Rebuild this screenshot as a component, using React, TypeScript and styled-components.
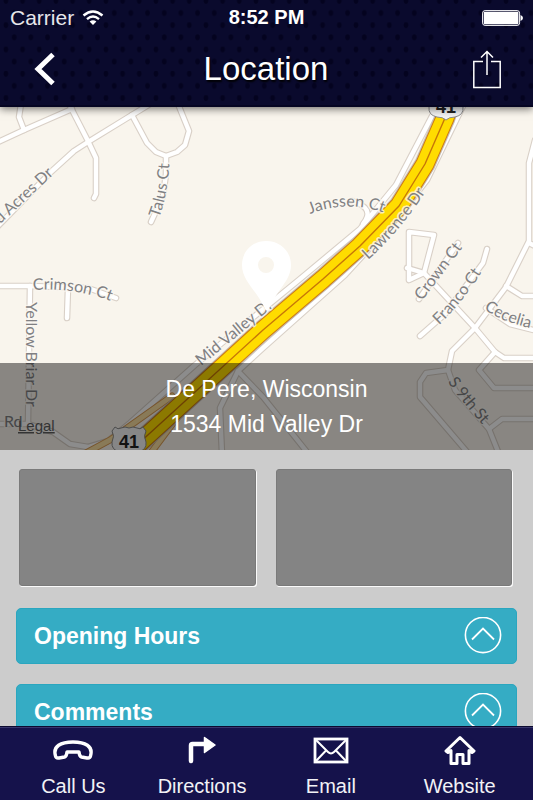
import React from "react";
import styled, { createGlobalStyle } from "styled-components";

const GlobalStyle = createGlobalStyle`
  *, *::before, *::after { box-sizing: border-box; }
  body {
    margin: 0;
    background: #cccccc;
    font-family: "Liberation Sans", Arial, sans-serif;
  }
`;

const Screen = styled.div`
  display: flex;
  flex-direction: column;
  height: 100vh;
  overflow: hidden;
  background: #cccccc;
`;

const Header = styled.header`
  position: relative;
  z-index: 1;
  flex: none;
  background: #0a0a2d;
  border-bottom: 2px solid #050522;
  box-shadow: 0 2px 8px rgba(0, 0, 0, 0.55);
  color: #fff;
`;

const Texture = styled.svg`
  position: absolute;
  inset: 0;
  width: 100%;
  height: 100%;
`;

const StatusBar = styled.div`
  position: relative;
  display: grid;
  grid-template-columns: 1fr auto 1fr;
  align-items: center;
  height: 35px;
  padding: 0 10px;
  font-size: 20px;
`;

const Carrier = styled.span`
  display: flex;
  align-items: center;
  gap: 8px;
  color: #e6e6ea;
  font-size: 21px;
`;

const Clock = styled.time`
  font-weight: bold;
`;

const BatteryIcon = styled.svg`
  justify-self: end;
`;

const NavBar = styled.div`
  position: relative;
  display: grid;
  grid-template-columns: 48px 1fr 48px;
  align-items: center;
  height: 70px;
  padding: 0 22px 2px 21px;
`;

const Title = styled.h1`
  margin: 0;
  text-align: center;
  font-size: 33px;
  line-height: 40px;
  font-weight: normal;
  text-shadow: 1px 2px 2px #000;
`;

const IconButton = styled.button`
  display: flex;
  align-items: center;
  justify-content: center;
  height: 48px;
  padding: 0;
  border: 0;
  background: none;
  color: #fff;
`;

const MapPanel = styled.section`
  position: relative;
  flex: none;
  height: 343px;
  background: #f9f5ed;
`;

const MapCanvas = styled.svg`
  display: block;
  width: 100%;
  height: 100%;
`;

const Address = styled.address`
  position: absolute;
  left: 0;
  right: 0;
  bottom: 0;
  padding: 9px 0 8px;
  background: rgba(0, 0, 0, 0.45);
  color: #fff;
  font-size: 23px;
  line-height: 35px;
  font-style: normal;
  text-align: center;
  pointer-events: none;
`;

const Content = styled.main`
  flex: 1;
  min-height: 0;
  overflow: hidden;
  display: flex;
  flex-direction: column;
  gap: 20px;
  padding: 19px 16px 0;
`;

const Photos = styled.div`
  flex: none;
  display: grid;
  grid-template-columns: 1fr 1fr;
  gap: 20px;
  padding: 0 5px 2px 3px;
`;

const Photo = styled.div`
  height: 117px;
  border: 1px solid #7a7a7a;
  border-radius: 3px;
  background: #848484;
  box-shadow: 1px 1px 0 0 #fafafa, 0 2px 0 -1px #fafafa;
`;

const Section = styled.button`
  flex: none;
  display: flex;
  align-items: center;
  justify-content: space-between;
  height: 56px;
  padding: 0 14px 0 17px;
  border: 1px solid #2aa6bf;
  border-radius: 5px;
  background: #35acc4;
  color: #fff;
  font: bold 23px "Liberation Sans", Arial, sans-serif;
`;

const TabBar = styled.nav`
  flex: none;
  display: grid;
  grid-template-columns: repeat(4, 1fr);
  height: 74px;
  padding: 0 9px;
  border-top: 1px solid #0c0a30;
  background: #15124b;
  box-shadow: inset 0 1px 0 #38366c;
`;

const Tab = styled.a`
  display: flex;
  flex-direction: column;
  align-items: center;
  gap: 7px;
  padding-top: 8px;
  color: #f2f2f6;
  font-size: 20px;
  line-height: 25px;
  text-decoration: none;
  white-space: nowrap;
`;

const TabIcon = styled.svg`
  flex: none;
  fill: none;
  stroke: #fff;
  stroke-width: 3;
`;

const localRoads = [
  "M-4 143L24 130L72 109",
  "M24 130L19 117L21 104",
  "M69 104L88 141L96 158V194L94 198",
  "M-4 228L52 171L74 151L88 142L132 115L150 104",
  "M132 115L147 143L156 152L166 156L177 152L185 145L189 131L178 104",
  "M166 156V174L163 196L151 222",
  "M-4 286H30L88 288L116 298",
  "M30 286L28 424",
  "M68 288L67 318",
  "M-4 424H28L53 432L70 444L88 447L108 441L130 423L195 365L300 279L360 229L396 185L432 116",
  "M464 104L427 180L400 215L345 275L263 348L238 371L220 408L222 454",
  "M238 371L263 397L307 452",
  "M363 224Q376 208 352 201",
  "M409 280V232L434 235L424 273L409 280",
  "M407 268L424 273L475 328L495 352L504 358H537",
  "M420 336L445 314L483 263L487 249",
  "M419 299L458 243",
  "M535 140L529 163V241L506 287L475 328L452 351L448 370L426 373L420 382V397L468 453",
  "M529 243L537 247",
  "M506 286L522 296H537",
  "M448 370L455 390L489 429L499 454",
  "M489 429L502 419H537",
  "M495 352L479 370L494 388H537",
  "M486 308L510 324L537 331",
];
const ramps = ["M84 454L110 440L172 396", "M150 454L180 414L200 396"];
const highway = "M449 106L445 118L425 164L399 206L360 246L323 279L263 330L138 444";

const labels = [
  { id: "acres", d: "M-34 256L54 174", text: "d Acres Dr", end: true },
  { id: "talus", d: "M159 218Q169 192 170 150", text: "Talus Ct" },
  { id: "janssen", d: "M310 214Q350 198 392 216", text: "Janssen Ct" },
  { id: "lawrence", d: "M368 260Q402 230 432 182", text: "Lawrence Dr" },
  { id: "crown", d: "M422 301L472 235", text: "Crown Ct" },
  { id: "franco", d: "M439 325Q464 302 492 256", text: "Franco Ct" },
  { id: "cecelia", d: "M484 309Q508 327 560 333", text: "Cecelia" },
  { id: "crimson", d: "M33 290Q82 287 122 306", text: "Crimson Ct" },
  { id: "yellow", d: "M26 302V430", text: "Yellow Briar Dr" },
  { id: "midvalley", d: "M201 366L290 293", text: "Mid Valley Dr" },
  { id: "ninth", d: "M448 382Q461 401 490 433", text: "S 9th St" },
];

const shield =
  "M-14 -13Q-11 -10 -8 -12Q-4 -14 0 -12Q4 -14 8 -12Q11 -10 14 -13L17 -9Q14 -4 17 2Q18 10 9 12Q3 12 0 15Q-3 12 -9 12Q-18 10 -17 2Q-14 -4 -17 -9Z";

function RouteShield({ x, y }: { x: number; y: number }) {
  return (
    <g transform={`translate(${x} ${y})`}>
      <path d={shield} fill="#f4f4f4" stroke="#8b8b8b" strokeWidth="1" />
      <text
        y="8"
        textAnchor="middle"
        fontFamily="Liberation Sans, Arial, sans-serif"
        fontWeight="bold"
        fontSize="18"
        fill="#222"
      >
        41
      </text>
    </g>
  );
}

function StreetMap() {
  return (
    <MapCanvas viewBox="0 107 533 343" preserveAspectRatio="xMidYMid slice">
      <g fill="none" strokeLinejoin="round" strokeLinecap="round">
        <g stroke="#d9d0c7" strokeWidth="6.6">
          {localRoads.map((d) => <path key={d} d={d} />)}
        </g>
        <g stroke="#fff" strokeWidth="4.4">
          {localRoads.map((d) => <path key={d} d={d} />)}
        </g>
        <g stroke="#d99a52" strokeWidth="7">
          {ramps.map((d) => <path key={d} d={d} />)}
        </g>
        <g stroke="#f9dfa0" strokeWidth="5">
          {ramps.map((d) => <path key={d} d={d} />)}
        </g>
        <path d={highway} stroke="#c4bdb5" strokeWidth="21" />
        <path d={highway} stroke="#cf7a10" strokeWidth="19" />
        <path d={highway} stroke="#ffdc00" strokeWidth="17" />
        <path d={highway} stroke="#c77608" strokeWidth="1.4" />
      </g>
      <g
        fontFamily="Lato, sans-serif"
        fontSize="16"
        fill="#808082"
        stroke="#fbf8f2"
        strokeOpacity="0.75"
        strokeWidth="3"
        strokeLinejoin="round"
        paintOrder="stroke"
      >
        {labels.map((l) => (
          <React.Fragment key={l.id}>
            <path id={l.id} d={l.d} fill="none" stroke="none" />
            <text textAnchor={l.end ? "end" : "start"}>
              <textPath href={`#${l.id}`} startOffset={l.end ? "100%" : "0"}>
                {l.text}
              </textPath>
            </text>
          </React.Fragment>
        ))}
        <text x="4" y="427">Rd</text>
      </g>
      <RouteShield x={446} y={105} />
      <RouteShield x={129} y={440} />
      <path
        fill="#fff"
        fillRule="evenodd"
        d="M266 241C252 241 242 252 242 265C242 281 256 289 265 309C266 311 268 311 269 309C277 289 291 281 291 265C291 252 281 241 266 241ZM266 257A8 8 0 1 1 266 273A8 8 0 1 1 266 257Z"
      />
      <a href="#legal">
        <text
          x="18"
          y="431"
          fontFamily="Liberation Sans, Arial, sans-serif"
          fontSize="15"
          fill="#606060"
          textDecoration="underline"
        >
          Legal
        </text>
      </a>
    </MapCanvas>
  );
}

function ToggleIcon() {
  return (
    <svg width="38" height="38" viewBox="0 0 38 38" fill="none" stroke="#fff" aria-hidden="true">
      <circle cx="19" cy="18" r="17.6" strokeWidth="1.6" />
      <path d="M8 22.5L19 11.500L30 22.5" strokeWidth="1.8" />
    </svg>
  );
}

export default function App() {
  return (
    <>
      <GlobalStyle />
      <Screen>
        <Header>
          <Texture aria-hidden="true">
            <defs>
              <pattern id="dots" width="16.67" height="24.3" patternUnits="userSpaceOnUse">
                <g fill="#04031f">
                  <ellipse cx="14.2" cy="13" rx="2.4" ry="3" />
                  <ellipse cx="5.9" cy="0.8" rx="2.4" ry="3" />
                  <ellipse cx="5.9" cy="25.1" rx="2.4" ry="3" />
                </g>
              </pattern>
            </defs>
            <rect width="100%" height="100%" fill="url(#dots)" />
          </Texture>
          <StatusBar>
            <Carrier>
              Carrier
              <svg width="22" height="16" viewBox="0 0 22 16" fill="none" stroke="#fff" aria-label="Wi-Fi">
                <path d="M1.5 5.5Q11 -2.500 20.500 5.500" strokeWidth="2.400" />
                <path d="M5 9.200Q11 4 17 9.200" strokeWidth="2.400" />
                <path d="M11 15L7.600 11.600Q11 9 14.400 11.600Z" fill="#fff" stroke="none" />
              </svg>
            </Carrier>
            <Clock>8:52 PM</Clock>
            <BatteryIcon width="41" height="16" viewBox="0 0 41 16" aria-label="Battery full">
              <rect x="0.6" y="0.6" width="37" height="14.8" rx="2.5" fill="none" stroke="#fff" strokeWidth="1" />
              <rect x="1.800" y="1.800" width="34.600" height="12.400" rx="1" fill="#fff" />
              <path d="M38.500 5Q41 6 41 8Q41 10 38.500 11Z" fill="#fff" />
            </BatteryIcon>
          </StatusBar>
          <NavBar>
            <IconButton aria-label="Back">
              <svg width="22" height="34" viewBox="0 0 22 34" fill="none" stroke="#fff" strokeWidth="5">
                <path d="M19 2.500L4 17L19 31.500" />
              </svg>
            </IconButton>
            <Title>Location</Title>
            <IconButton aria-label="Share">
              <svg width="28" height="39" viewBox="0 0 28 39" fill="none" stroke="#fff" strokeWidth="1.500">
                <path d="M10 11.500H0.800V37.500H27.200V11.500H18M14 25V1.500M8 7.500L14 1.500L20 7.500" />
              </svg>
            </IconButton>
          </NavBar>
        </Header>

        <MapPanel aria-label="Map">
          <StreetMap />
          <Address>
            De Pere, Wisconsin
            <br />
            1534 Mid Valley Dr
          </Address>
        </MapPanel>

        <Content>
          <Photos>
            <Photo />
            <Photo />
          </Photos>
          <Section>
            Opening Hours
            <ToggleIcon />
          </Section>
          <Section>
            Comments
            <ToggleIcon />
          </Section>
        </Content>

        <TabBar>
          <Tab href="#call">
            <TabIcon width="42" height="32" viewBox="0 0 42 32" aria-hidden="true">
              <path
                strokeLinejoin="round"
                strokeWidth="3.400"
                d="M3.500 21C0.500 11 9 7 21 7S41.500 11 38.500 21Q38 23.500 35 23L29.500 22Q27.500 21.500 27 17H15Q14.500 21.500 12.500 22L7 23Q4 23.500 3.500 21Z"
              />
            </TabIcon>
            Call Us
          </Tab>
          <Tab href="#directions">
            <TabIcon width="28" height="32" viewBox="0 0 28 32" aria-hidden="true">
              <path d="M3 26V10.500Q3 9 4.500 9H18" strokeWidth="4.500" strokeLinecap="round" />
              <path d="M16.500 2.500L27 10L16.500 17.500Z" fill="#fff" strokeWidth="1.500" strokeLinejoin="round" />
            </TabIcon>
            Directions
          </Tab>
          <Tab href="#email">
            <TabIcon width="36" height="32" viewBox="0 0 36 32" aria-hidden="true">
              <rect x="2" y="4" width="32" height="23" strokeWidth="2.800" />
              <path d="M3 5L15 17Q18 20 21 17L33 5M3 26L13 15.500M33 26L23 15.500" strokeWidth="2" />
            </TabIcon>
            Email
          </Tab>
          <Tab href="#website">
            <TabIcon width="34" height="32" viewBox="0 0 34 32" aria-hidden="true">
              <path
                strokeLinejoin="round"
                d="M17 2.500L3 16L5 17.500L8 15.500V28.500H14V19.500H20V28.500H26V15.500L29 17.500L31 16Z"
              />
            </TabIcon>
            Website
          </Tab>
        </TabBar>
      </Screen>
    </>
  );
}
